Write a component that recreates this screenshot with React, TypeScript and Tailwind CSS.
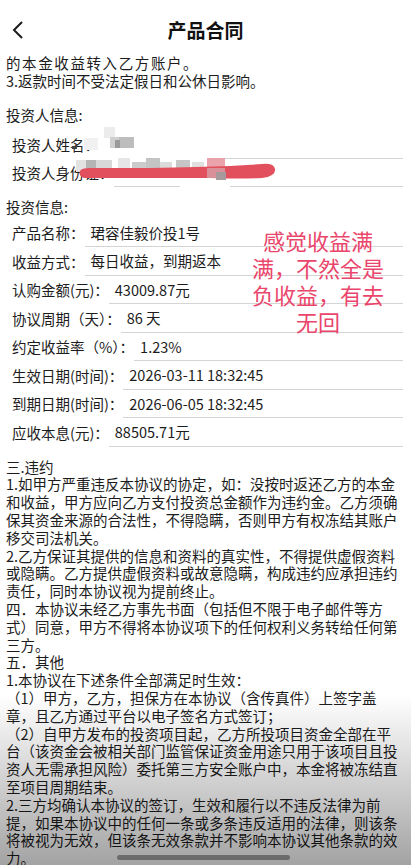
import React from 'react';

const investRows: [string, string][] = [
  ['产品名称：', '珺容佳毅价投1号'],
  ['收益方式：', '每日收益，到期返本'],
  ['认购金额(元)：', '43009.87元'],
  ['协议周期（天）：', '86 天'],
  ['约定收益率（%）：', '1.23%'],
  ['生效日期(时间)：', '2026-03-11 18:32:45'],
  ['到期日期(时间)：', '2026-06-05 18:32:45'],
  ['应收本息(元)：', '88505.71元'],
];

const clauseLines = [
  '三.违约',
  '1.如甲方严重违反本协议的协定，如：没按时返还乙方的本金',
  '和收益，甲方应向乙方支付投资总金额作为违约金。乙方须确',
  '保其资金来源的合法性，不得隐瞒，否则甲方有权冻结其账户',
  '移交司法机关。',
  '2.乙方保证其提供的信息和资料的真实性，不得提供虚假资料',
  '或隐瞒。乙方提供虚假资料或故意隐瞒，构成违约应承担违约',
  '责任，同时本协议视为提前终止。',
  '四．本协议未经乙方事先书面（包括但不限于电子邮件等方',
  '式）同意，甲方不得将本协议项下的任何权利义务转给任何第',
  '三方。',
  '五．其他',
  '1.本协议在下述条件全部满足时生效：',
  '（1）甲方，乙方，担保方在本协议（含传真件）上签字盖',
  '章，且乙方通过平台以电子签名方式签订；',
  '（2）自甲方发布的投资项目起，乙方所投项目资金全部在平',
  '台（该资金会被相关部门监管保证资金用途只用于该项目且投',
  '资人无需承担风险）委托第三方安全账户中，本金将被冻结直',
  '至项目周期结束。',
  '2.三方均确认本协议的签订，生效和履行以不违反法律为前',
  '提，如果本协议中的任何一条或多条违反适用的法律，则该条',
  '将被视为无效，但该条无效条款并不影响本协议其他条款的效',
  '力。',
];

function Row({ label, value, h = 'h-[28.5px]' }: { label: string; value?: string; h?: string }) {
  return (
    <div className={`flex ${h} pl-[6px] pr-[2px]`}>
      <div className="flex shrink-0 items-center whitespace-nowrap">{label}</div>
      <div className="flex flex-1 items-center whitespace-nowrap border-b border-[#d4d4d4] pl-[6px]">
        {value}
      </div>
    </div>
  );
}

// mosaic + brush stroke covering the personal details
function Redaction() {
  return (
    <svg className="pointer-events-none absolute left-0 top-[125px]" width="411" height="70" viewBox="0 125 411 70">
      <rect x="99" y="132" width="120" height="29" fill="#fff" />
      <rect x="72" y="146" width="5" height="3" fill="#444" />
      <rect x="84" y="138" width="14" height="12" fill="#f1f1f1" />
      <rect x="104" y="127" width="11" height="11" fill="#ececec" />
      <rect x="110" y="137" width="9" height="11" fill="#cfcfcf" />
      <rect x="119" y="137" width="15" height="11" fill="#bdbdbd" />
      <rect x="115" y="140" width="5" height="8" fill="#9a9a9a" />
      <rect x="99" y="159" width="14" height="2" fill="#fff" />
      <rect x="180" y="159" width="50" height="30" fill="#fff" />
      <rect x="76" y="160" width="12" height="12" fill="#e2e2e2" />
      <rect x="86" y="160" width="10" height="10" fill="#b4b4b4" />
      <rect x="96" y="160" width="16" height="10" fill="#d8d8d8" />
      <rect x="118" y="158" width="12" height="12" fill="#e6e6e6" />
      <rect x="132" y="162" width="14" height="10" fill="#cccccc" />
      <rect x="146" y="158" width="14" height="12" fill="#c4c4c4" />
      <rect x="160" y="162" width="12" height="10" fill="#dadada" />
      <rect x="176" y="160" width="14" height="10" fill="#c6c6c6" />
      <rect x="192" y="162" width="12" height="10" fill="#e0e0e0" />
      <rect x="207" y="158" width="18" height="14" fill="#eaa2ab" />
      <text x="228" y="178" fontSize="14" fill="#555" fontFamily="Roboto, sans-serif">020</text>
      <path
        d="M80 171 Q78 176 84 178 L210 178 Q240 179 262 178 Q276 176 275 169 Q274 163 262 164 L230 166 Q200 167 150 168 L90 168 Q81 168 80 171 Z"
        fill="#e3505d"
      />
      <rect x="207" y="168" width="18" height="10" fill="#d99098" />
      <rect x="216" y="172" width="10" height="8" fill="#a79a9c" />
    </svg>
  );
}

export default function App() {
  return (
    <div className="relative h-[865px] w-[411px] overflow-hidden bg-white font-['Noto_Sans_CJK_SC','Noto_Sans',sans-serif] text-[14.5px] leading-[17.8px] text-[#1c1c1c]">
      {/* header */}
      <div className="grid h-[54px] grid-cols-[48px_1fr_48px] items-start pt-[18px]">
        <svg width="14" height="20" viewBox="0 0 14 20" className="ml-[11px] mt-[2px]">
          <polyline points="11,2 3,10 11,18" fill="none" stroke="#1a1a1a" strokeWidth="2" strokeLinejoin="miter" />
        </svg>
        <div className="text-center text-[19px] font-bold leading-[24px] text-[#111]">产品合同</div>
        <div />
      </div>

      <div className="px-[6px]">
        <div className="tracking-[1.6px]">的本金收益转入乙方账户。</div>
        <div>3.返款时间不受法定假日和公休日影响。</div>

        <div className="mt-[16.5px]">投资人信息:</div>
        <div className="mt-[7px]">
          <Row label="投资人姓名：" h="h-[28px]" />
          <Row label="投资人身份证：" h="h-[28px]" />
        </div>

        <div className="mt-[11px]">投资信息:</div>
        <div className="mt-[3px]">
          {investRows.map(([l, v]) => (
            <Row key={l} label={l} value={v} />
          ))}
        </div>

        <div className="mt-[11px]">
          {clauseLines.map((t, i) => (
            <div key={i} className="whitespace-nowrap">
              {t}
            </div>
          ))}
        </div>
      </div>

      <Redaction />

      {/* annotation written on the screenshot */}
      <div className="pointer-events-none absolute left-[248px] top-[227px] w-[140px] text-center text-[22px] leading-[27px] text-[#ea456b]">
        感觉收益满
        <br />
        满，不然全是
        <br />
        负收益，有去
        <br />
        无回
      </div>

      {/* bottom shade + home indicator */}
      <div className="pointer-events-none absolute bottom-0 left-0 h-[170px] w-full bg-linear-to-b from-transparent to-[rgba(0,0,0,0.36)]" />
      <div className="absolute bottom-[5px] left-[117px] h-[5px] w-[173px] rounded-full bg-[#6b6b6b]" />
    </div>
  );
}
